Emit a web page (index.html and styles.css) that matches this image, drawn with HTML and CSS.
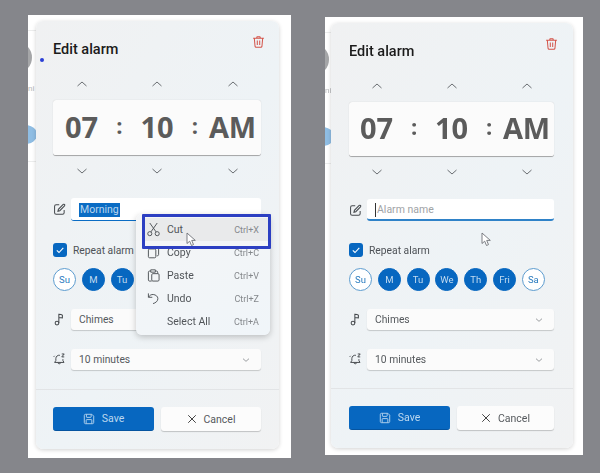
FILE: index.html
```html
<!DOCTYPE html>
<html lang="en">
<head>
<meta charset="utf-8">
<title>Edit alarm</title>
<link rel="stylesheet" href="styles.css">
</head>
<body>
<svg class="defs" width="0" height="0" aria-hidden="true">
  <symbol id="trash" viewBox="0 0 14 14"><path d="M1.200 2.900h11.600M5 2.700l.5-1.400h3l.5 1.400M2.500 3l.8 8.800c.1.600.5.900 1 .9h5.400c.5 0 .9-.3 1-.9L11.500 3M5.700 5.500v4.800M8.300 5.500v4.800" fill="none" stroke="currentColor" stroke-width="1.100"/></symbol>
  <symbol id="up" viewBox="0 0 12 8"><path d="M1.500 6L6 2l4.500 4" fill="none" stroke="currentColor" stroke-width="1"/></symbol>
  <symbol id="down" viewBox="0 0 12 8"><path d="M1.500 2L6 6l4.500-4" fill="none" stroke="currentColor" stroke-width="1"/></symbol>
  <symbol id="edit" viewBox="0 0 14 14"><path d="M12 7.500v3c0 1-.6 1.700-1.700 1.700H3.400c-1 0-1.700-.7-1.700-1.700V3.700C1.700 2.600 2.400 2 3.400 2h3.300M5.300 8.900l.5-2.100L11 1.600c.4-.4 1-.4 1.400 0s.4 1 0 1.400L7.300 8.300z" fill="none" stroke="currentColor" stroke-width="1.100"/></symbol>
  <symbol id="note" viewBox="0 0 14 14"><circle cx="4.300" cy="10.800" r="2" fill="none" stroke="currentColor" stroke-width="1.100"/><path d="M6.300 10.800V1.300c2 0 3 .4 3.800 1.100v2.800L6.400 4.800" fill="none" stroke="currentColor" stroke-width="1.100"/></symbol>
  <symbol id="snooze" viewBox="0 0 16 16"><path d="M8.500 2.800c-2.700-.5-5 1.400-5 4.100v2.300L2 11.600h11.500L12.200 9.300V7.600M6 11.800c.2 2 3.200 2 3.500 0M2 3.500L.9 4.700M10.800 1.200h3l-3 3.600h3" fill="none" stroke="currentColor" stroke-width="1.200"/></symbol>
  <symbol id="save" viewBox="0 0 14 14"><path d="M1.500 3c0-.9.600-1.500 1.500-1.500h7.300l2.200 2.200V11c0 .9-.6 1.500-1.500 1.500H3c-.9 0-1.500-.6-1.500-1.500zM4 1.700v2.800c0 .4.200.6.600.6h4.300c.4 0 .6-.2.600-.6V1.700M3.700 12.300V8.300c0-.4.200-.6.600-.6h5.400c.4 0 .6.200.6.600v4" fill="none" stroke="currentColor" stroke-width="1.050"/></symbol>
  <symbol id="close" viewBox="0 0 12 12"><path d="M1.500 1.500l9 9M10.500 1.500l-9 9" fill="none" stroke="currentColor" stroke-width="1.100"/></symbol>
  <symbol id="check" viewBox="0 0 10 10"><path d="M1.800 5.300l2.200 2.200 4.300-4.700" fill="none" stroke="currentColor" stroke-width="1.100"/></symbol>
  <symbol id="scissors" viewBox="0 0 14 16"><circle cx="3" cy="12.500" r="2.200" fill="none" stroke="currentColor"/><circle cx="11" cy="12.500" r="2.200" fill="none" stroke="currentColor"/><path d="M4.200 10.600L11 1M9.800 10.600L3 1" fill="none" stroke="currentColor"/></symbol>
  <symbol id="copy" viewBox="0 0 14 14"><path d="M4.500 3V2.500c0-.7.500-1.200 1.200-1.200h5.600c.7 0 1.200.5 1.200 1.200v6.800c0 .7-.5 1.200-1.200 1.200H10.500M2.700 3.200h5.600c.7 0 1.200.5 1.200 1.200v7.100c0 .7-.5 1.200-1.200 1.200H2.700c-.7 0-1.200-.5-1.200-1.200V4.400c0-.7.500-1.200 1.200-1.200z" fill="none" stroke="currentColor"/></symbol>
  <symbol id="paste" viewBox="0 0 14 14"><path d="M3.500 2.200H2.700c-.7 0-1.200.5-1.200 1.200v8.400c0 .7.500 1.200 1.200 1.200h2.300M9.500 2.200h.8c.7 0 1.200.5 1.200 1.200v1.500M4 .9h5v2.500H4zM6.300 5h5.500c.7 0 1.200.5 1.200 1.200v5.600c0 .7-.5 1.200-1.200 1.200H6.300c-.7 0-1.200-.5-1.200-1.200V6.200c0-.7.500-1.200 1.200-1.200z" fill="none" stroke="currentColor"/></symbol>
  <symbol id="undo" viewBox="0 0 14 14"><path d="M1.500 1.500v4.200h4.200M1.700 5.500c1.200-2 3-3 5-2.800 2.800.3 5 2 5 4.500 0 2.600-2.400 4.600-5.200 5.300" fill="none" stroke="currentColor" stroke-linejoin="round"/></symbol>
  <symbol id="pointer" viewBox="0 0 11 15"><path d="M1 1v10.500l2.700-2.300 1.800 4.300 2-.9-1.800-4.200h3.600z" fill="#fff" stroke="#6d7176" stroke-width=".9"/></symbol>
</svg>

<main class="stage">
  <section class="shot shot-left">
    <div class="behind behind-avatar"></div>
    <div class="behind behind-day"></div>
    <div class="behind behind-line line-top"></div>
    <div class="behind behind-line line-mid"></div>
    <span class="behind behind-text">ni</span>
    <div class="dialog">
      <header class="head"><h1 class="title">Edit alarm</h1><svg class="trash"><use href="#trash"/></svg></header>
      <div class="spin-row"><svg class="chev"><use href="#up"/></svg><svg class="chev"><use href="#up"/></svg><svg class="chev"><use href="#up"/></svg></div>
      <div class="time"><span class="num">07</span><span class="colon">:</span><span class="num">10</span><span class="colon">:</span><span class="num">AM</span></div>
      <div class="spin-row spin-down"><svg class="chev"><use href="#down"/></svg><svg class="chev"><use href="#down"/></svg><svg class="chev"><use href="#down"/></svg></div>
      <div class="field name-field"><svg class="field-icon"><use href="#edit"/></svg><div class="input"><span class="selected">Morning</span></div></div>
      <label class="repeat"><span class="checkbox"><svg class="tick"><use href="#check"/></svg></span>Repeat alarm</label>
      <div class="days"><span class="day">Su</span><span class="day on">M</span><span class="day on">Tu</span><span class="day on">We</span><span class="day on">Th</span><span class="day on">Fri</span><span class="day">Sa</span></div>
      <div class="field sound"><svg class="field-icon"><use href="#note"/></svg><div class="select">Chimes<svg class="select-chev"><use href="#down"/></svg></div></div>
      <div class="field snooze"><svg class="field-icon"><use href="#snooze"/></svg><div class="select">10 minutes<svg class="select-chev"><use href="#down"/></svg></div></div>
      <hr class="rule">
      <div class="actions"><button class="btn primary"><svg class="btn-icon"><use href="#save"/></svg>Save</button><button class="btn"><svg class="btn-icon x"><use href="#close"/></svg>Cancel</button></div>
    </div>
    <i class="focus-dot"></i>
  </section>

  <section class="shot shot-right">
    <div class="behind behind-avatar"></div>
    <div class="behind behind-day"></div>
    <div class="behind behind-line line-top"></div>
    <div class="behind behind-line line-mid"></div>
    <span class="behind behind-text">ni</span>
    <div class="dialog">
      <header class="head"><h1 class="title">Edit alarm</h1><svg class="trash"><use href="#trash"/></svg></header>
      <div class="spin-row"><svg class="chev"><use href="#up"/></svg><svg class="chev"><use href="#up"/></svg><svg class="chev"><use href="#up"/></svg></div>
      <div class="time"><span class="num">07</span><span class="colon">:</span><span class="num">10</span><span class="colon">:</span><span class="num">AM</span></div>
      <div class="spin-row spin-down"><svg class="chev"><use href="#down"/></svg><svg class="chev"><use href="#down"/></svg><svg class="chev"><use href="#down"/></svg></div>
      <div class="field name-field"><svg class="field-icon"><use href="#edit"/></svg><div class="input focused"><i class="caret"></i><span class="placeholder">Alarm name</span></div></div>
      <label class="repeat"><span class="checkbox"><svg class="tick"><use href="#check"/></svg></span>Repeat alarm</label>
      <div class="days"><span class="day">Su</span><span class="day on">M</span><span class="day on">Tu</span><span class="day on">We</span><span class="day on">Th</span><span class="day on">Fri</span><span class="day">Sa</span></div>
      <div class="field sound"><svg class="field-icon"><use href="#note"/></svg><div class="select">Chimes<svg class="select-chev"><use href="#down"/></svg></div></div>
      <div class="field snooze"><svg class="field-icon"><use href="#snooze"/></svg><div class="select">10 minutes<svg class="select-chev"><use href="#down"/></svg></div></div>
      <hr class="rule">
      <div class="actions"><button class="btn primary"><svg class="btn-icon"><use href="#save"/></svg>Save</button><button class="btn"><svg class="btn-icon x"><use href="#close"/></svg>Cancel</button></div>
    </div>
  </section>
</main>

<div class="menu">
  <div class="item hover"><svg class="item-icon scissors"><use href="#scissors"/></svg><span class="item-label">Cut</span><span class="key">Ctrl+X</span></div>
  <div class="item"><svg class="item-icon"><use href="#copy"/></svg><span class="item-label">Copy</span><span class="key">Ctrl+C</span></div>
  <div class="item"><svg class="item-icon"><use href="#paste"/></svg><span class="item-label">Paste</span><span class="key">Ctrl+V</span></div>
  <div class="item"><svg class="item-icon"><use href="#undo"/></svg><span class="item-label">Undo</span><span class="key">Ctrl+Z</span></div>
  <div class="item"><span class="item-icon"></span><span class="item-label">Select All</span><span class="key">Ctrl+A</span></div>
</div>
<div class="callout"></div>
<svg class="cursor cursor-left"><use href="#pointer"/></svg>
<svg class="cursor cursor-right"><use href="#pointer"/></svg>
</body>
</html>
```
FILE: styles.css
```css
* { box-sizing: border-box; }
html, body { margin: 0; height: 473px; overflow: hidden; }
body {
  position: relative;
  width: 600px;
  background: #85868b;
  font-family: Roboto, "Open Sans", sans-serif;
  color: #4d5156;
}
.defs { position: absolute; }
.stage {
  display: flex;
  align-items: flex-start;
  padding-left: 28px;
  filter: blur(.4px);
}
.shot {
  position: relative;
  background: #fff;
  overflow: hidden;
}
.shot-left {
  width: 263px;
  height: 443px;
  margin-top: 15px;
  padding: 6px 12px 0 8px;
  --time-h: 56px;
  --input-h: 23px;
  --rule-gap: 19px;
  --pad-l: 17px;
  --pad-r: 18px;
  --step: 75.5px;
}
.shot-right {
  width: 258px;
  height: 438px;
  margin-top: 17px;
  margin-left: 34px;
  padding: 6px 10px 0 6px;
  --time-h: 55px;
  --input-h: 22px;
  --rule-gap: 18px;
  --pad-l: 18px;
  --pad-r: 19px;
  --step: 75px;
}
.behind { position: absolute; }
.behind-avatar {
  left: -26px;
  top: 27px;
  width: 30px;
  height: 31px;
  border-radius: 50%;
  background: #a5a6a8;
}
.behind-day {
  left: -14px;
  top: 110px;
  width: 23px;
  height: 19px;
  border-radius: 50%;
  background: #8fbde3;
}
.behind-line { left: 0; width: 10px; height: 1px; background: #eceded; }
.line-top { top: 15px; }
.line-mid { top: 146px; }
.behind-text { left: 0; top: 69px; font-size: 8px; line-height: 10px; color: #b4b6b8; }
.focus-dot {
  position: absolute;
  left: 12px;
  top: 43px;
  width: 4px;
  height: 4px;
  border-radius: 50%;
  background: #2a3fd6;
}
.dialog {
  position: relative;
  padding: 18px var(--pad-r) 18px var(--pad-l);
  border-radius: 7px;
  background: linear-gradient(120deg, #f0f1f2 0%, #eef3f6 55%, #f1f2f3 100%);
  box-shadow: 0 1px 4px rgba(0, 0, 0, .18);
}
.head { display: flex; justify-content: space-between; height: 20px; }
.title { margin: 0; padding-top: 1px; font-size: 14.5px; line-height: 20px; font-weight: 500; color: #1b1b1b; }
.trash { width: 13px; height: 14px; margin: -4px -4px 0 0; color: #d4544a; }
.spin-row {
  display: grid;
  grid-template-columns: repeat(3, var(--step));
  justify-content: center;
  justify-items: center;
  align-items: center;
  height: 16px;
  margin-top: 17px;
  color: #6a6e72;
}
.spin-down { margin-top: 7px; }
.chev { width: 12px; height: 8px; }
.time {
  display: grid;
  grid-template-columns: repeat(5, calc(var(--step) / 2));
  justify-content: center;
  align-items: center;
  justify-items: center;
  height: var(--time-h);
  margin-top: 8px;
  padding-bottom: 3px;
  border-radius: 3px;
  background: #fbfbfb;
  border-bottom: 1px solid #a8a9aa;
  box-shadow: 0 0 1px rgba(0, 0, 0, .2);
  color: #5b5b5b;
  font-family: "Open Sans", sans-serif;
  font-size: 29px;
  font-weight: 700;
  letter-spacing: -.2px;
}
.colon { font-size: 22px; margin-top: -3px; }
.field { display: flex; align-items: center; gap: 5px; }
.field-icon { flex: none; width: 13px; height: 13px; color: #45494d; }
.name-field { margin-top: 19px; }
.sound, .snooze { margin-top: 19px; }
.sound { margin-top: 18px; }
.input {
  position: relative;
  flex: 1;
  display: flex;
  align-items: center;
  height: var(--input-h);
  padding: 1px 0 0 8px;
  font-size: 10.5px;
  border-radius: 3px;
  background: #fff;
  border-bottom: 1.5px solid #0a6cc4;
}
.focused { border-bottom: 2px solid #2f82c8; }
.selected { background: #0a6cc4; color: #b9d6ee; line-height: 14px; padding: 0 1px; }
.caret { width: 1px; height: 14px; margin-right: 1px; background: #333; }
.placeholder { color: #a0a3a6; }
.repeat {
  display: flex;
  align-items: center;
  gap: 6px;
  height: 14px;
  margin-top: 22px;
  font-size: 10.3px;
}
.checkbox {
  display: flex;
  width: 14px;
  height: 14px;
  border-radius: 3px;
  background: #0767c0;
  color: #fff;
  align-items: center;
  justify-content: center;
}
.tick { width: 10px; height: 10px; }
.days { display: flex; gap: 5.8px; height: 23px; margin-top: 11px; }
.day {
  display: flex;
  align-items: center;
  justify-content: center;
  width: 23px;
  height: 23px;
  border-radius: 50%;
  background: #fff;
  border: 1.2px solid #5d9ccf;
  color: #2b7cbf;
  font-size: 9.5px;
}
.day.on { background: #0767c0; border-color: #0767c0; color: #c3dcf1; }
.select {
  flex: 1;
  display: flex;
  align-items: center;
  justify-content: space-between;
  height: 21px;
  padding: 0 11px 0 8px;
  border-radius: 3px;
  background: #fbfbfb;
  box-shadow: 0 1px 1px rgba(0, 0, 0, .18);
  font-size: 10.3px;
  color: #55595d;
}
.select-chev { width: 8px; height: 6px; color: #6a6e72; }
.rule {
  height: 1px;
  margin: var(--rule-gap) calc(0px - var(--pad-r)) 0 calc(0px - var(--pad-l));
  border: 0;
  background: #e2e4e6;
}
.actions { display: grid; grid-template-columns: 101px 1fr; gap: 7px; margin-top: 17px; }
.btn {
  display: flex;
  align-items: center;
  justify-content: center;
  gap: 7px;
  height: 24px;
  border: 0;
  border-radius: 3px;
  background: #fcfcfc;
  box-shadow: 0 1px 1px rgba(0, 0, 0, .2);
  color: #55595d;
  font: inherit;
  font-size: 10.5px;
}
.btn.primary { background: #0767c0; color: #bcd8ef; border-bottom: 1px solid #0554a0; box-shadow: none; }
.btn-icon { width: 12px; height: 12px; }
.x { width: 10px; height: 10px; color: #333; }
.menu {
  position: absolute;
  left: 136px;
  top: 214px;
  width: 134px;
  padding-top: 4px;
  padding-bottom: 2px;
  border-radius: 6px;
  background: linear-gradient(160deg, #f4f5f6, #f0f5f9);
  box-shadow: 0 2px 6px rgba(0, 0, 0, .22);
  font-size: 10.5px;
  filter: blur(.4px);
}
.item { display: flex; align-items: center; height: 23px; padding: 0 11px; color: #515559; }
.item.hover { background: #e9eaeb; margin-left: 6px; padding-left: 5px; }
.item-icon { flex: none; width: 13px; height: 13px; color: #4b4f53; margin-right: 7px; }
.scissors { height: 15px; }
.item-label { flex: 1; }
.key { font-size: 9px; color: #85888c; }
.callout {
  position: absolute;
  left: 142px;
  top: 214px;
  width: 129px;
  height: 35px;
  border: 3px solid #2c3fc2;
  border-radius: 1px;
}
.cursor { position: absolute; width: 11px; height: 15px; }
.cursor-left { left: 186px; top: 232px; }
.cursor-right { left: 481px; top: 232px; }
```
